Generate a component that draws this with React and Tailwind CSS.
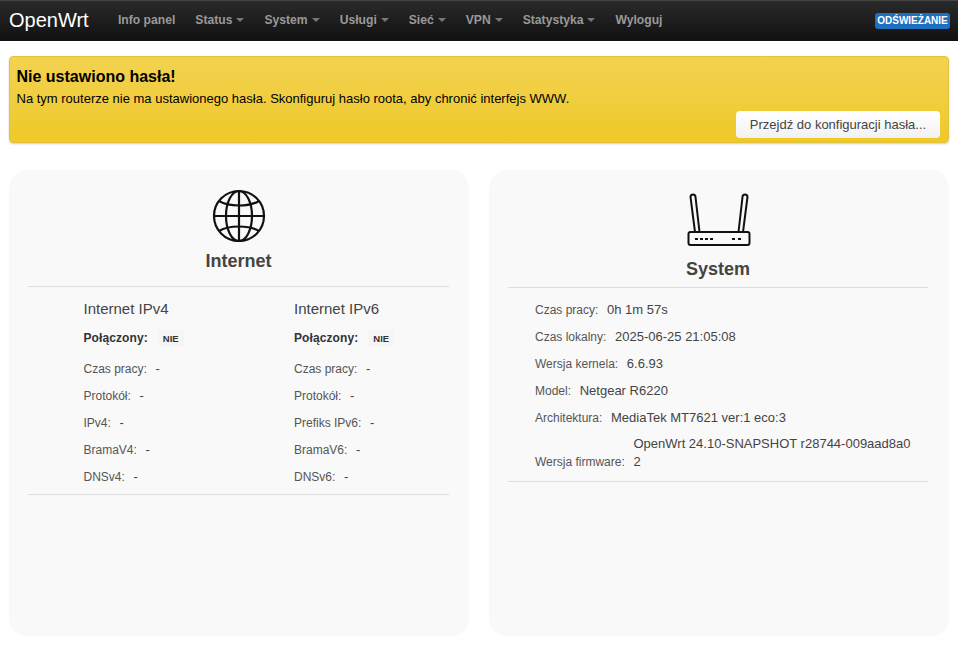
const navItems = [
  { label: 'Info panel' },
  { label: 'Status', caret: true },
  { label: 'System', caret: true },
  { label: 'Usługi', caret: true },
  { label: 'Sieć', caret: true },
  { label: 'VPN', caret: true },
  { label: 'Statystyka', caret: true },
  { label: 'Wyloguj' },
]

const ipv4 = [
  ['Czas pracy', '-'],
  ['Protokół', '-'],
  ['IPv4', '-'],
  ['BramaV4', '-'],
  ['DNSv4', '-'],
]

const ipv6 = [
  ['Czas pracy', '-'],
  ['Protokół', '-'],
  ['Prefiks IPv6', '-'],
  ['BramaV6', '-'],
  ['DNSv6', '-'],
]

const system = [
  ['Czas pracy', '0h 1m 57s'],
  ['Czas lokalny', '2025-06-25 21:05:08'],
  ['Wersja kernela', '6.6.93'],
  ['Model', 'Netgear R6220'],
  ['Architektura', 'MediaTek MT7621 ver:1 eco:3'],
]

function GlobeIcon() {
  return (
    <svg width="54" height="54" viewBox="0 0 54 54" fill="none" stroke="#111" strokeWidth="2.2">
      <circle cx="27" cy="27" r="25" />
      <ellipse cx="27" cy="27" rx="13" ry="25" />
      <path d="M27 2v50M2 27h50" />
      <path d="M7 12c5 3 12 4.500 20 4.500S42 15 47 12" />
      <path d="M7 42c5-3 12-4.500 20-4.500S42 39 47 42" />
    </svg>
  )
}

function RouterIcon() {
  return (
    <svg className="ml-[2px]" width="64" height="56" viewBox="0 0 64 56" fill="none" stroke="#111" strokeWidth="2">
      <path d="M8 40 3.500 5a2.500 2.500 0 0 1 5 0L12.500 40" />
      <path d="M51.500 40 55.500 5a2.500 2.500 0 0 1 5 0L56 40" />
      <rect x="1.500" y="40" width="61" height="13" rx="2" />
      <path d="M8 47h3M13 47h3M18 47h3M23 47h3M45 47h3M51 47h3" strokeWidth="1.800" />
    </svg>
  )
}

function InfoRow({ label, value }) {
  return (
    <div className="h-[27px] flex items-center text-[12px] text-[#555]">
      <span>{label}</span>
      <span className="w-[12px]">:</span>
      <span className="text-[13px] text-[#444]">{value}</span>
    </div>
  )
}

function NetColumn({ title, rows }) {
  return (
    <div className="w-[210.500px] shrink-0">
      <div className="text-[15px] leading-[22px] text-[#444]">{title}</div>
      <div className="mt-[5px] h-[26px] flex items-center text-[#333]">
        <span className="text-[12px] font-bold tracking-[0.1px]">Połączony:</span>
        <span className="ml-[10px] px-[5px] py-[2px] rounded-[3px] bg-[#f5f5f5] text-[9.500px] font-bold leading-[13px]">NIE</span>
      </div>
      <div className="mt-[4px]">
        {rows.map(([label, value]) => (
          <InfoRow key={label} label={label} value={value} />
        ))}
      </div>
    </div>
  )
}

export default function App() {
  return (
    <div className="w-[958px] h-[650px] overflow-hidden bg-white font-['Liberation_Sans',Arial,sans-serif]">
      <nav className="h-[41px] border-t border-[#444] bg-gradient-to-b from-[#2a2a2a] to-[#111] flex items-center px-[9px]">
        <span className="text-[20px] text-white w-[109px] -mt-[3px]">OpenWrt</span>
        <ul className="flex items-center gap-[20px] text-[12.150px] font-bold text-[#999] -mt-[2px]">
          {navItems.map((item) => (
            <li key={item.label} className="flex items-center">
              {item.label}
              {item.caret && <span className="ml-[4px] mt-[1px] border-x-[4px] border-t-[4px] border-x-transparent border-t-[#777]" />}
            </li>
          ))}
        </ul>
        <span className="ml-auto -mr-[1px] w-[75px] text-center bg-[#1f6fc0] text-white text-[10px] font-bold rounded-[3px] h-[16px] leading-[16px]">ODŚWIEŻANIE</span>
      </nav>

      <main className="px-[9px]">
        <section className="mt-[15px] h-[87px] rounded-[4px] border border-[#e4c23c] bg-gradient-to-b from-[#f3d24f] to-[#eec926] shadow-[0_1px_2px_rgba(0,0,0,0.2)] pl-[6.500px] pr-[7px] pt-[10px]">
          <h4 className="text-[16px] font-bold leading-[20px] text-black">Nie ustawiono hasła!</h4>
          <p className="text-[13px] leading-[18px] mt-[3px] text-black">Na tym routerze nie ma ustawionego hasła. Skonfiguruj hasło roota, aby chronić interfejs WWW.</p>
          <div className="flex justify-end mt-[3px] mr-[1px]">
            <button className="h-[27px] w-[204px] rounded-[4px] bg-gradient-to-b from-white to-[#f2f2f2] text-[13px] text-[#444]">Przejdź do konfiguracji hasła...</button>
          </div>
        </section>

        <div className="mt-[27px] grid grid-cols-2 gap-[20px]">
          <section className="h-[466px] rounded-[18px] bg-[#f9f9f9] pl-[19px] pr-[20px] pt-[19px]">
            <div className="flex flex-col items-center pb-[12px] border-b border-[#ddd]">
              <GlobeIcon />
              <h3 className="mt-[5px] text-[18px] font-bold leading-[26px] text-[#444]">Internet</h3>
            </div>
            <div className="flex pl-[55.500px] border-b border-[#ddd] pb-[4px] pt-[11px]">
              <NetColumn title="Internet IPv4" rows={ipv4} />
              <NetColumn title="Internet IPv6" rows={ipv6} />
            </div>
          </section>

          <section className="h-[466px] rounded-[18px] bg-[#f9f9f9] pl-[19px] pr-[21px] pt-[22px]">
            <div className="flex flex-col items-center pb-[5px] border-b border-[#ddd]">
              <RouterIcon />
              <h3 className="mt-[8px] text-[18px] font-bold leading-[26px] text-[#444]">System</h3>
            </div>
            <div className="pl-[27px] pt-[8px] pb-[10px] border-b border-[#ddd]">
              {system.map(([label, value]) => (
                <InfoRow key={label} label={label} value={value} />
              ))}
              <div className="flex items-end mt-[4px] text-[12px] text-[#555] leading-[18px]">
                <span>Wersja firmware</span>
                <span className="w-[12px]">:</span>
                <span className="w-[280px] text-[13px] text-[#444] leading-[18px]">OpenWrt 24.10-SNAPSHOT r28744-009aad8a0 2</span>
              </div>
            </div>
          </section>
        </div>
      </main>
    </div>
  )
}
